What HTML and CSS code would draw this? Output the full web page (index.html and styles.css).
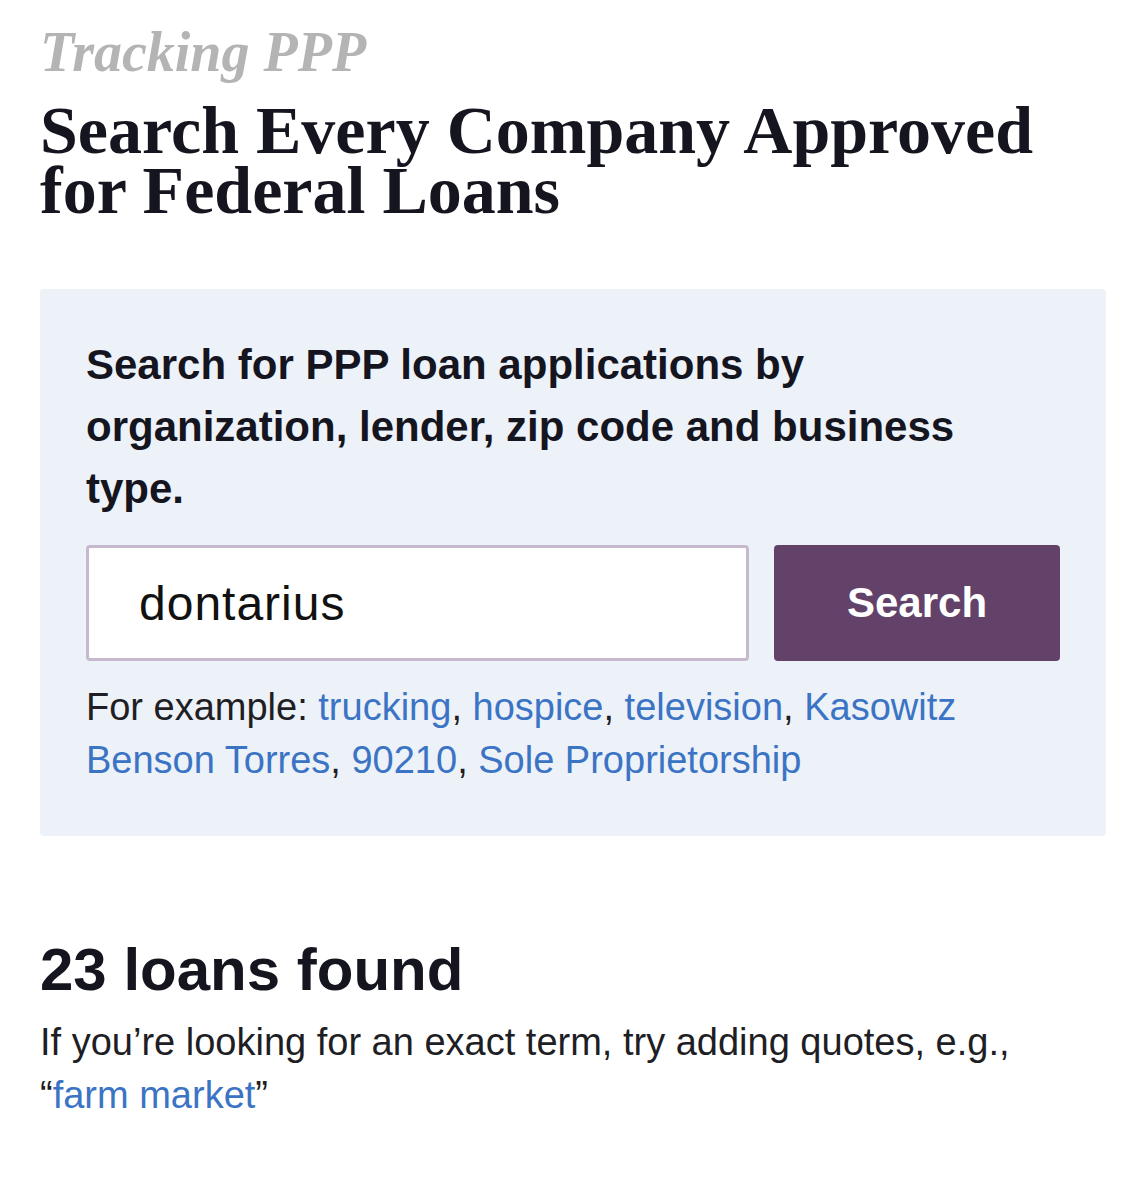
FILE: index.html
```html
<!DOCTYPE html>
<html lang="en">
<head>
    <meta charset="UTF-8">
    <meta name="viewport" content="width=device-width, initial-scale=1.0">
    <title>Tracking PPP</title>
    <link rel="stylesheet" href="styles.css">
</head>
<body>
    <div class="kicker">Tracking PPP</div>
    <h1 class="title">Search Every Company Approved for Federal Loans</h1>

    <div class="search-box">
        <p class="search-intro">Search for PPP loan applications by organization, lender, zip code and business type.</p>
        <form class="search-form">
            <input type="text" class="search-input" name="q" value="dontarius">
            <button type="button" class="search-button">Search</button>
        </form>
        <p class="examples">For example: <a href="#">trucking</a>, <a href="#">hospice</a>, <a href="#">television</a>, <a href="#">Kasowitz</a> <a href="#">Benson Torres</a>, <a href="#">90210</a>, <a href="#">Sole Proprietorship</a></p>
    </div>

    <h2 class="results-count">23 loans found</h2>
    <p class="results-hint">If you’re looking for an exact term, try adding quotes, e.g., <span class="nowrap">“<a href="#">farm market</a>”</span></p>
</body>
</html>
```

FILE: styles.css
```css
body {
    margin: 0;
    padding: 22px 40px 40px;
    background-color: #fff;
    color: #15151f;
    font-family: 'Liberation Sans', Arial, sans-serif;
}

a {
    color: #3b74c4;
    text-decoration: none;
}

.nowrap {
    white-space: nowrap;
}

.kicker {
    font-family: 'Liberation Serif', 'Times New Roman', serif;
    font-style: italic;
    font-weight: bold;
    font-size: 56px;
    line-height: 60px;
    color: #b4b4b4;
}

.title {
    font-family: 'Liberation Serif', 'Times New Roman', serif;
    font-weight: bold;
    font-size: 68px;
    line-height: 60px;
    margin: 18px 0 0;
    max-width: 1050px;
}

.search-box {
    margin-top: 69px;
    background-color: #edf1f8;
    border-radius: 4px;
    padding: 45px 46px 49px;
}

.search-intro {
    margin: 0;
    font-weight: bold;
    font-size: 42px;
    line-height: 62px;
    max-width: 900px;
}

.search-form {
    display: flex;
    gap: 25px;
    margin-top: 25px;
}

.search-input {
    flex: 1;
    min-width: 0;
    height: 116px;
    box-sizing: border-box;
    border: 3px solid #c6b9cd;
    border-radius: 4px;
    background-color: #fff;
    padding: 0 50px;
    font-family: 'Liberation Sans', Arial, sans-serif;
    font-size: 48px;
    letter-spacing: 1px;
    color: #111;
}

.search-button {
    flex-shrink: 0;
    width: 286px;
    height: 116px;
    border: none;
    border-radius: 4px;
    background-color: #63426a;
    color: #fff;
    font-family: 'Liberation Sans', Arial, sans-serif;
    font-weight: bold;
    font-size: 42px;
    cursor: pointer;
}

.examples {
    margin: 20px 0 0;
    font-size: 38px;
    line-height: 53px;
    color: #1e1e24;
}

.results-count {
    margin: 99px 0 0;
    font-size: 60px;
    line-height: 70px;
}

.results-hint {
    margin: 11px 0 0;
    font-size: 38px;
    line-height: 53px;
    color: #1e1e24;
}
```
